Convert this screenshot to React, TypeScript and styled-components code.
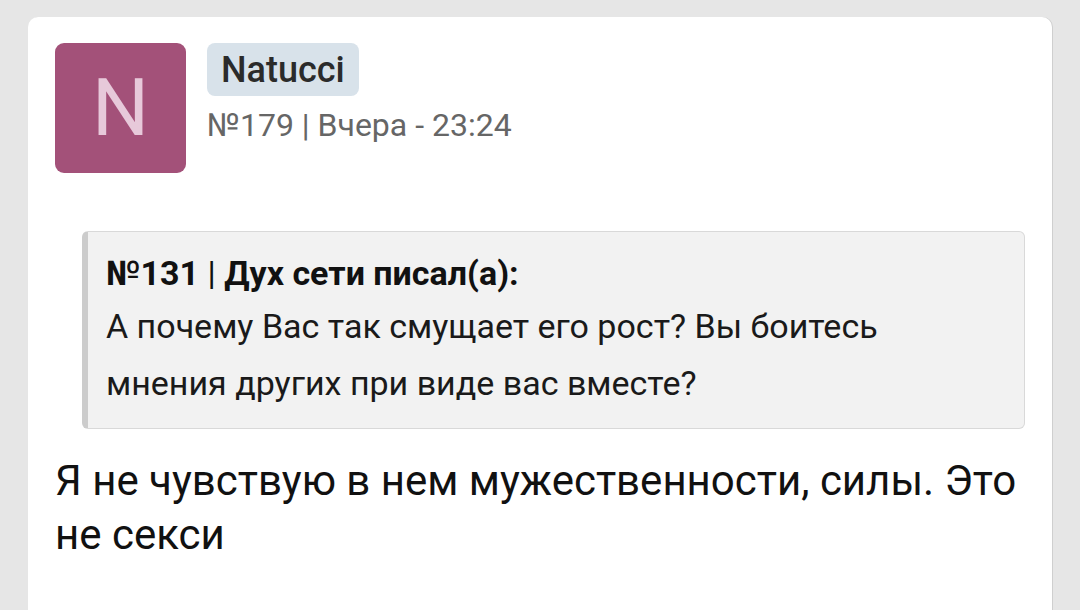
import React from "react";
import styled, { createGlobalStyle } from "styled-components";

const Global = createGlobalStyle`
  html, body { margin: 0; padding: 0; background: #e6e6e6; }
  body { font-family: Roboto, "Noto Sans", sans-serif; }
`;

const Page = styled.div`
  width: 1080px;
  height: 610px;
  overflow: hidden;
  padding: 17px 28px 0 28px;
  box-sizing: border-box;
`;

const Card = styled.div`
  background: #fff;
  border-radius: 10px 10px 0 0;
  box-shadow: 1px 0 0 #cfcfcf;
  padding: 26px 27px 60px 27px;
  min-height: 620px;
  box-sizing: border-box;
`;

const Header = styled.div`
  display: flex;
  gap: 21px;
  align-items: flex-start;
`;

const Avatar = styled.div<{ $bg: string }>`
  width: 131px;
  height: 130px;
  border-radius: 9px;
  background: ${(p) => p.$bg};
  color: #e7c9da;
  font-size: 80px;
  font-family: Roboto, sans-serif;
  display: flex;
  align-items: center;
  justify-content: center;
  line-height: 1;
`;

const Info = styled.div`
  display: flex;
  flex-direction: column;
  align-items: flex-start;
`;

const NameBadge = styled.div`
  background: #d8e2ea;
  border-radius: 8px;
  padding: 0 14px;
  height: 53px;
  display: flex;
  align-items: center;
  font-size: 36px;
  font-weight: 500;
  color: #2b2b2b;
`;

const Meta = styled.div`
  margin-top: 9px;
  font-size: 32px;
  line-height: 40px;
  color: #666;
`;

const Quote = styled.div`
  margin: 58px 0 0 27px;
  background: #f2f2f2;
  border: 1.5px solid #d9d9d9;
  border-left: 6px solid #cccccc;
  border-radius: 6px;
  padding: 16px 20px 16px 18px;
`;

const QuoteTitle = styled.div`
  font-size: 34px;
  font-weight: 700;
  color: #111;
  line-height: 50px;
`;

const QuoteSep = styled.span`
  font-weight: 400;
`;

const QuoteText = styled.div`
  font-size: 34px;
  line-height: 57px;
  color: #1a1a1a;
`;

const Body = styled.div`
  margin-top: 25px;
  font-size: 42px;
  line-height: 54px;
  color: #111;
`;

export default function App() {
  return (
    <>
      <Global />
      <Page>
        <Card>
          <Header>
            <Avatar $bg="#a35179">N</Avatar>
            <Info>
              <NameBadge>Natucci</NameBadge>
              <Meta>№179 | Вчера - 23:24</Meta>
            </Info>
          </Header>
          <Quote>
            <QuoteTitle>
              №131 <QuoteSep>|</QuoteSep> Дух сети писал(а):
            </QuoteTitle>
            <QuoteText>
              А почему Вас так смущает его рост? Вы боитесь мнения других при виде вас вместе?
            </QuoteText>
          </Quote>
          <Body>Я не чувствую в нем мужественности, силы. Это не секси</Body>
        </Card>
      </Page>
    </>
  );
}
